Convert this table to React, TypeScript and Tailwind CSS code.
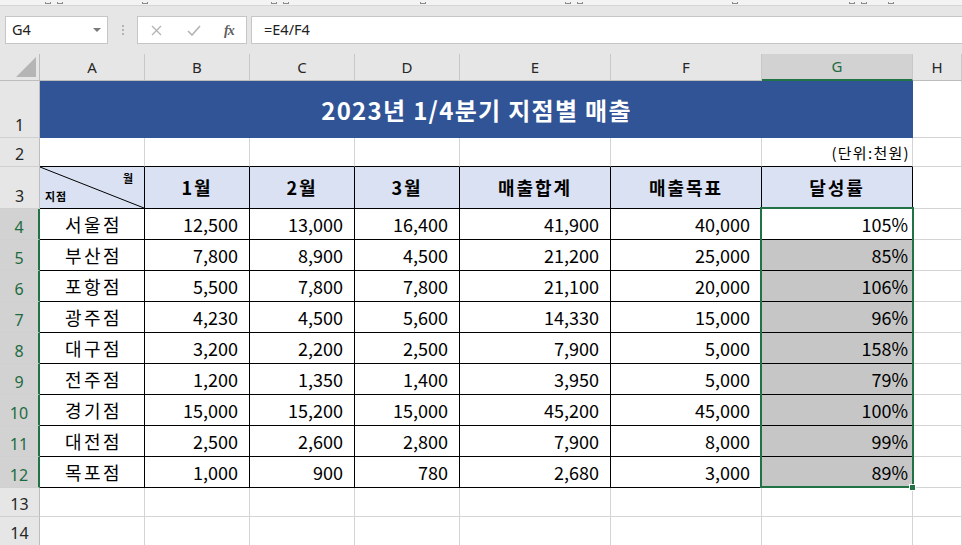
import React from 'react'

const cjk = "font-['Noto_Sans_CJK_KR','Noto_Sans',sans-serif]"
const ui = "font-['Noto_Sans','Liberation_Sans',sans-serif]"

const cols = ['A', 'B', 'C', 'D', 'E', 'F', 'G', 'H']

const data = [
  ['서울점', '12,500', '13,000', '16,400', '41,900', '40,000', '105%'],
  ['부산점', '7,800', '8,900', '4,500', '21,200', '25,000', '85%'],
  ['포항점', '5,500', '7,800', '7,800', '21,100', '20,000', '106%'],
  ['광주점', '4,230', '4,500', '5,600', '14,330', '15,000', '96%'],
  ['대구점', '3,200', '2,200', '2,500', '7,900', '5,000', '158%'],
  ['전주점', '1,200', '1,350', '1,400', '3,950', '5,000', '79%'],
  ['경기점', '15,000', '15,200', '15,000', '45,200', '45,000', '100%'],
  ['대전점', '2,500', '2,600', '2,800', '7,900', '8,000', '99%'],
  ['목포점', '1,000', '900', '780', '2,680', '3,000', '89%'],
]

// bottoms of the ribbon group labels, cut off by the window edge
const ribbonMarks = [45, 57, 142, 271, 283, 420, 565, 577, 732, 849, 861, 888]

function RowHead({ n, selected }: { n: number; selected?: boolean }) {
  return (
    <div
      className={`flex items-end justify-center pb-[4px] border-b border-b-[#d0d0d0] text-[16px] leading-none ${ui} ${
        selected
          ? 'bg-[#d2d2d2] text-[#1e6b40] border-r-2 border-r-[#217346]'
          : 'bg-[#e6e6e6] text-[#262626] border-r border-r-[#bdbdbd]'
      }`}
    >
      {n}
    </div>
  )
}

function Blank({ bottomBlack }: { bottomBlack?: boolean }) {
  return (
    <div
      className={`border-r border-b border-r-[#d4d4d4] ${
        bottomBlack ? 'border-b-black' : 'border-b-[#d4d4d4]'
      }`}
    />
  )
}

function FormulaBar() {
  return (
    <div className="bg-[#e6e6e6]">
      <div className="h-[6px] bg-[#f3f3f3] border-b border-[#d6d6d6] flex">
        {ribbonMarks.map((x, i) => (
          <span
            key={i}
            className="mt-[2px] w-[6px] h-[2px] border-b border-l border-r border-[#8a8a8a]"
            style={{ marginLeft: i === 0 ? x : x - ribbonMarks[i - 1] - 6 }}
          />
        ))}
      </div>
      <div className="pt-[10px] pb-[10px]">
        <div className="flex h-[28px]">
          <div className={`ml-[5px] w-[103px] bg-white border border-[#c6c6c6] flex items-center justify-between pl-[6px] pr-[6px] text-[14.5px] text-[#222] ${ui}`}>
            <span>G4</span>
            <svg width="8" height="5" viewBox="0 0 8 5">
              <polygon points="0,0 8,0 4,4" fill="#7a7a7a" />
            </svg>
          </div>
          <div className="w-[29px] flex flex-col items-center justify-center gap-[2px]">
            <span className="w-[2px] h-[2px] bg-[#b4b4b4]" />
            <span className="w-[2px] h-[2px] bg-[#b4b4b4]" />
            <span className="w-[2px] h-[2px] bg-[#b4b4b4]" />
          </div>
          <div className="w-[110px] bg-white border border-[#c6c6c6] flex items-center">
            <svg className="ml-[13px]" width="11" height="11" viewBox="0 0 11 11">
              <path d="M1 1 L10 10 M10 1 L1 10" stroke="#b3b3b3" strokeWidth="1.3" />
            </svg>
            <svg className="ml-[25px]" width="14" height="11" viewBox="0 0 14 11">
              <path d="M1 6 L5 10 L13 1" stroke="#b3b3b3" strokeWidth="1.6" fill="none" />
            </svg>
            <span className="ml-[23px] text-[14px] italic font-bold text-[#606060] font-['Liberation_Serif',serif] tracking-[-1px]">
              fx
            </span>
          </div>
          <div className={`ml-[4px] flex-1 bg-white border border-r-0 border-[#c6c6c6] flex items-center pl-[12px] text-[14.5px] text-[#222] ${ui}`}>
            =E4/F4
          </div>
        </div>
      </div>
    </div>
  )
}

export default function App() {
  return (
    <div className="w-[962px] h-[545px] overflow-hidden bg-white">
      <FormulaBar />
      <div className="relative grid grid-cols-[40px_105px_105px_105px_105px_151px_151px_151px_1fr] grid-rows-[27px_57px_29px_42px_repeat(9,31px)_29px_29px]">
        {/* column headers */}
        <div className="bg-[#e6e6e6] border-r border-b border-[#bdbdbd] flex items-end justify-end pr-[3px] pb-[3px]">
          <svg width="20" height="20" viewBox="0 0 20 20">
            <polygon points="20,0 20,20 0,20" fill="#b5b5b5" />
          </svg>
        </div>
        {cols.map((c) => (
          <div
            key={c}
            className={`flex items-center justify-center text-[15px] ${ui} border-r border-r-[#c8c8c8] ${
              c === 'G'
                ? 'bg-[#d2d2d2] text-[#1e6b40] border-b-2 border-b-[#217346]'
                : 'bg-[#e6e6e6] text-[#262626] border-b border-b-[#bdbdbd]'
            }`}
          >
            {c}
          </div>
        ))}

        {/* row 1 */}
        <RowHead n={1} />
        <div className={`col-span-7 bg-[#305496] flex items-center justify-center text-white font-bold text-[24px] tracking-[1.3px] ${cjk}`}>
          2023년 1/4분기 지점별 매출
        </div>
        <Blank />

        {/* row 2 */}
        <RowHead n={2} />
        {[0, 1, 2, 3, 4, 5].map((i) => (
          <Blank key={i} bottomBlack />
        ))}
        <div className={`border-r border-b border-r-[#d4d4d4] border-b-black flex items-end justify-end pr-[2px] pb-[2px] text-[15px] tracking-[1.3px] text-black ${cjk}`}>
          (단위:천원)
        </div>
        <Blank />

        {/* row 3 */}
        <RowHead n={3} />
        <div className={`relative bg-[#d9e1f2] border-r border-b border-black ${cjk} font-bold text-[11px] text-black`}>
          <svg className="absolute inset-0 w-full h-full" viewBox="0 0 104 41" preserveAspectRatio="none">
            <line x1="0" y1="0" x2="104" y2="41" stroke="black" strokeWidth="1" />
          </svg>
          <div className="flex flex-col h-full justify-between px-[5px] pt-[3px] pb-[4px]">
            <span className="self-end mr-[6px]">월</span>
            <span className="tracking-[1px]">지점</span>
          </div>
        </div>
        {['1월', '2월', '3월', '매출합계', '매출목표', '달성률'].map((h) => (
          <div
            key={h}
            className={`bg-[#d9e1f2] border-r border-b border-black flex items-center justify-center font-bold text-[18px] tracking-[2px] text-black ${cjk}`}
          >
            {h}
          </div>
        ))}
        <Blank />

        {/* data rows */}
        {data.map((r, ri) => (
          <React.Fragment key={r[0]}>
            <RowHead n={ri + 4} selected />
            {r.map((v, ci) => (
              <div
                key={ci}
                className={`border-r border-b border-black flex items-center text-[18px] text-black ${cjk} ${
                  ci === 0
                    ? 'justify-center tracking-[2.5px] pl-[3px]'
                    : ci === 6
                    ? `justify-end pr-[4px] ${ri > 0 ? 'bg-[#c6c6c6]' : ''}`
                    : 'justify-end pr-[11px]'
                }`}
              >
                {v}
              </div>
            ))}
            <Blank />
          </React.Fragment>
        ))}

        {/* rows 13, 14 */}
        {[13, 14].map((n) => (
          <React.Fragment key={n}>
            <RowHead n={n} />
            {cols.map((c) => (
              <Blank key={c} />
            ))}
          </React.Fragment>
        ))}

        {/* selection G4:G12 */}
        <div className="absolute left-[760px] top-[153px] w-[154px] h-[281px] border-2 border-[#217346] pointer-events-none" />
        <div className="absolute left-[909px] top-[430px] w-[7px] h-[7px] bg-[#217346] border border-white pointer-events-none" />
      </div>
    </div>
  )
}
